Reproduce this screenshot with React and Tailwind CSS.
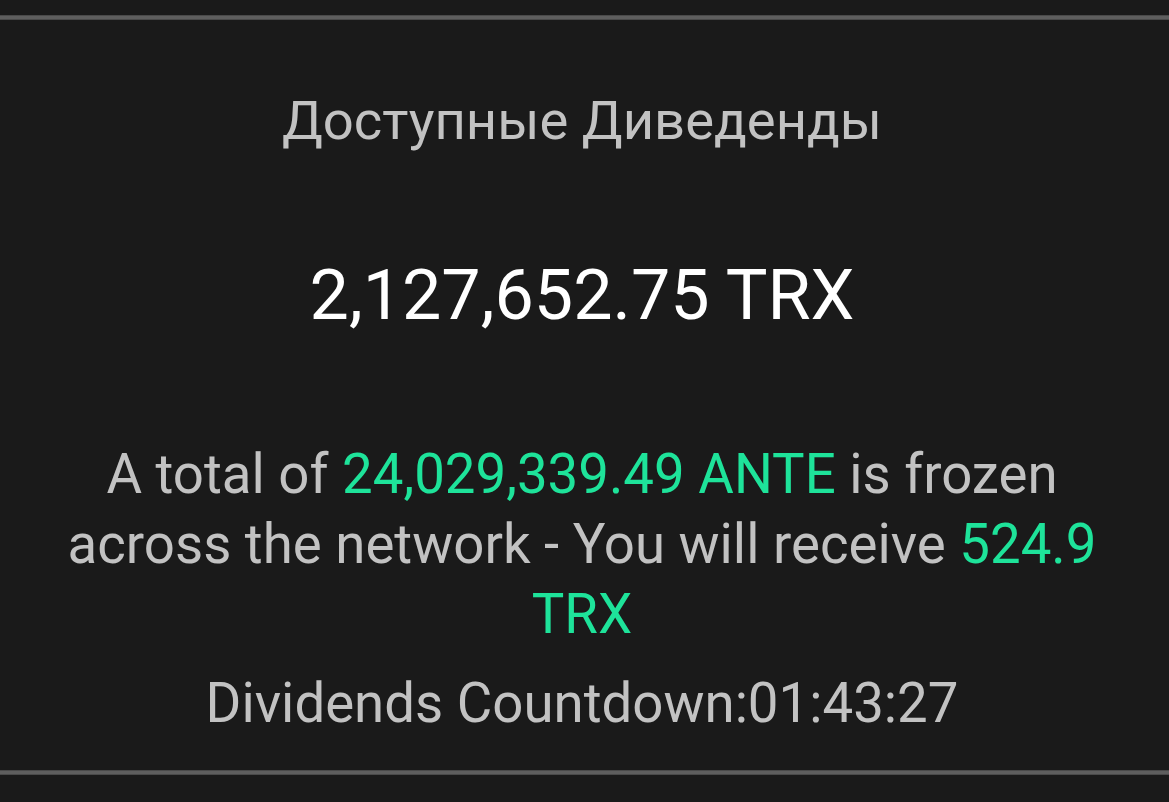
export default function App() {
  return (
    <div className="w-[1169px] h-[802px] bg-[#1a1a1a] overflow-hidden" style={{ fontFamily: "Roboto, 'Noto Sans', sans-serif" }}>
      <div className="h-[15px]" />
      <div className="h-[5px] bg-[#5e5e5e] border-y border-[#4a4a4a]" />
      <div className="h-[750px] flex flex-col items-center pl-[56px] pr-[61px] text-center">
        <div className="mt-[69px] text-[54.4px] leading-[64px] text-[#c2c2c2]">Доступные Диведенды</div>
        <div className="mt-[101px] text-[70px] leading-[82px] text-white">2,127,652.75 TRX</div>
        <div className="mt-[103px] text-[54.6px] leading-[70px] text-[#c2c2c2]">
          A total of <span className="text-[#1ee39a]">24,029,339.49 ANTE</span> is frozen across the network - You will receive <span className="text-[#1ee39a]">524.9 TRX</span>
        </div>
        <div className="mt-[19px] text-[54.6px] leading-[70px] text-[#c2c2c2]">Dividends Countdown:01:43:27</div>
      </div>
      <div className="h-[5px] bg-[#5e5e5e] border-y border-[#4a4a4a]" />
    </div>
  );
}
